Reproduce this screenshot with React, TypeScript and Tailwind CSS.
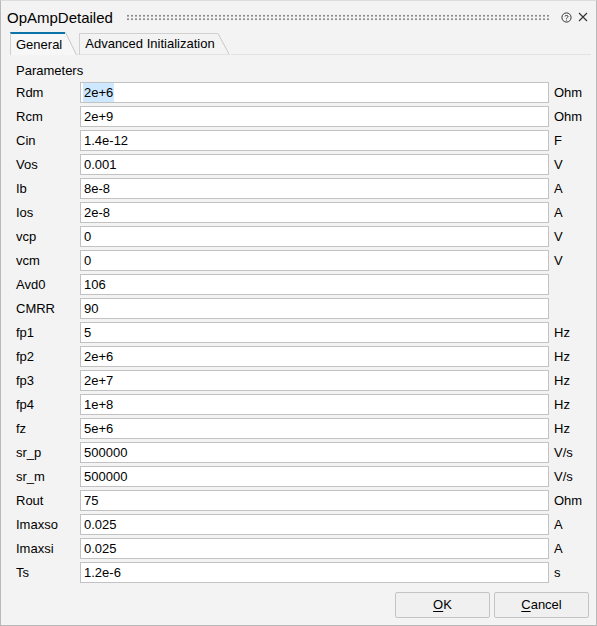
import React from "react";

const rows: [string, string, string][] = [
  ["Rdm", "2e+6", "Ohm"],
  ["Rcm", "2e+9", "Ohm"],
  ["Cin", "1.4e-12", "F"],
  ["Vos", "0.001", "V"],
  ["Ib", "8e-8", "A"],
  ["Ios", "2e-8", "A"],
  ["vcp", "0", "V"],
  ["vcm", "0", "V"],
  ["Avd0", "106", ""],
  ["CMRR", "90", ""],
  ["fp1", "5", "Hz"],
  ["fp2", "2e+6", "Hz"],
  ["fp3", "2e+7", "Hz"],
  ["fp4", "1e+8", "Hz"],
  ["fz", "5e+6", "Hz"],
  ["sr_p", "500000", "V/s"],
  ["sr_m", "500000", "V/s"],
  ["Rout", "75", "Ohm"],
  ["Imaxso", "0.025", "A"],
  ["Imaxsi", "0.025", "A"],
  ["Ts", "1.2e-6", "s"],
];

export default function App() {
  return (
    <div className="w-[597px] h-[626px] bg-[#f3f3f3] border border-[#b9b9b9] border-t-[#dcdcdc] flex flex-col font-['Liberation_Sans',Arial,sans-serif] text-[13px] text-black overflow-hidden">
      {/* Title bar */}
      <div className="h-[30px] flex items-center pl-[6px] pr-[8px] shrink-0">
        <span className="text-[15px] leading-none text-black pt-[2px]">OpAmpDetailed</span>
        <div className="flex-1 ml-[13px] mr-[10px] h-[7px] mt-[2px] bg-[radial-gradient(circle,#8c8c8c_0.9px,transparent_1.2px)] bg-[length:4px_3.5px]" />
        <svg width="11" height="11" viewBox="0 0 11 11" className="mt-[2px]">
          <circle cx="5.5" cy="5.5" r="4.6" fill="none" stroke="#333" strokeWidth="1" />
          <path d="M3.9 4.4 C3.9 3.2 7.1 3.2 7.1 4.5 C7.1 5.5 5.5 5.4 5.5 6.6" fill="none" stroke="#333" strokeWidth="1" />
          <circle cx="5.5" cy="8" r="0.6" fill="#333" />
        </svg>
        <svg width="10" height="10" viewBox="0 0 10 10" className="ml-[6px] mt-[2px]">
          <path d="M1 1 L9 9 M9 1 L1 9" stroke="#333" strokeWidth="1.1" />
        </svg>
      </div>

      {/* Tabs */}
      <div className="h-[24px] flex items-end pl-[9px] pr-[5px] shrink-0 relative">
        <div className="absolute left-[230px] right-[5px] bottom-0 h-px bg-[#e2e2e2]" />
        <div className="flex items-stretch h-[23px]">
          <div className="h-full flex items-center pl-[5px] pr-[3px] border-l border-[#d0d0d0] border-t-2 border-t-[#0a74a8] bg-[#f7f7f7] text-black">
            General
          </div>
          <svg width="12" height="23" viewBox="0 0 12 23" className="block">
            <path d="M0 0 L0 23 L12 23 Z" fill="#f7f7f7" />
            <path d="M0.5 0.5 L11.5 23" stroke="#c8c8c8" strokeWidth="1" fill="none" />
          </svg>
        </div>
        <div className="flex items-stretch h-[22px]">
          <div className="w-[2px] h-full border-b border-[#e2e2e2]" />
          <div className="h-full flex items-center pl-[5px] pr-[3px] border-l border-t border-[#d0d0d0] border-b border-b-[#e2e2e2] text-black">
            Advanced Initialization
          </div>
          <svg width="12" height="22" viewBox="0 0 12 22" className="block">
            <path d="M0 0.5 L11.5 22" stroke="#c8c8c8" strokeWidth="1" fill="none" />
            <path d="M0 21.5 L12 21.5" stroke="#e2e2e2" strokeWidth="1" fill="none" />
          </svg>
        </div>
      </div>

      {/* Content */}
      <div className="flex flex-col pl-[15px] pr-[4px] pt-[7px]">
        <div className="h-[17px] leading-[17px] mb-[3px]">Parameters</div>
        <div className="flex flex-col gap-[3px]">
          {rows.map(([label, value, unit], i) => (
            <div key={label} className="flex items-center h-[21px]">
              <div className="w-[64px] shrink-0">{label}</div>
              <div className="w-[469px] h-[21px] shrink-0 bg-white border border-[#c2c2c2] flex items-center pl-[2px]">
                {i === 0 ? (
                  <span className="bg-[#cde8ff] px-[1px]">{value}</span>
                ) : (
                  <span className="px-[1px]">{value}</span>
                )}
              </div>
              <div className="ml-[5px]">{unit}</div>
            </div>
          ))}
        </div>
      </div>

      {/* Buttons */}
      <div className="flex justify-end gap-[4px] pr-[7px] mt-[9px]">
        <button className="w-[95px] h-[26px] bg-[#f0f0f0] border border-[#c4c4c4] rounded-[2px] text-black">
          <span className="underline underline-offset-2">O</span>K
        </button>
        <button className="w-[95px] h-[26px] bg-[#f0f0f0] border border-[#c4c4c4] rounded-[2px] text-black">
          <span className="underline underline-offset-2">C</span>ancel
        </button>
      </div>
    </div>
  );
}
